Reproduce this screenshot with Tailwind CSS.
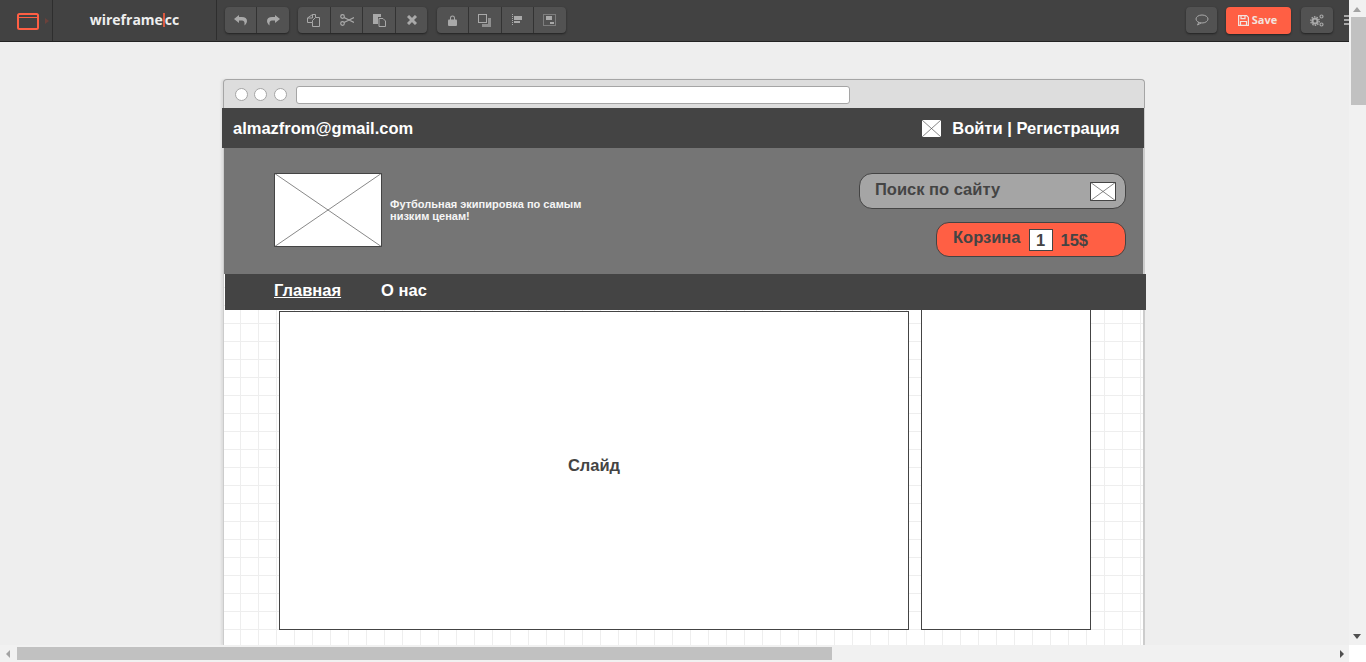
<!DOCTYPE html>
<html lang="en">
<head>
  <meta charset="UTF-8" />
  <title>wireframe.cc</title>
  <script src="https://cdn.jsdelivr.net/npm/@tailwindcss/browser@4"></script>
</head>
<body class="h-[662px] w-[1366px] overflow-hidden bg-[#eeeeee] font-['Liberation_Sans',sans-serif]">
  <div class="relative h-[662px] w-[1366px] overflow-hidden">

    <!-- Top toolbar -->
    <header class="flex h-[42px] w-[1349px] items-start border-b border-[#222222] bg-[#424242]">
      <div class="flex h-[41px] w-[53px] items-center border-r border-[#2e2e2e] pl-[17px]">
        <svg width="22" height="18" viewBox="0 0 22 18" fill="none" stroke="#ff5f44" stroke-width="2"><rect x="1" y="2" width="20" height="15" rx="1.500"/><path d="M1 5.500h20" stroke-width="1"/></svg>
        <span class="ml-[6px] h-0 w-0 border-y-[3px] border-l-[4px] border-y-transparent border-l-[#6b413b]"></span>
      </div>
      <div class="flex h-[40px] w-[164px] items-center justify-center border-r border-[#2e2e2e] pb-[1px] font-['Open_Sans',sans-serif] text-[14px] font-bold text-[#eeeeee]">
        wireframe<span class="h-[14px] w-[2px] bg-[#d9583f]"></span>cc
      </div>

      <div class="mt-[7px] ml-[8px] flex h-[26px] rounded-[4px] bg-[#525252] shadow-[0_1px_2px_#222222]">
        <div class="flex w-[32px] items-center justify-center border-r border-[#333333]">
          <svg width="13" height="12" viewBox="0 0 13 12" fill="#a9a9a9"><path d="M5 1 0 5l5 4V6.500h3c1.500 0 2.500 1 2.500 2.500v2.500C12 10 13 8.500 13 7c0-2.500-2-4-5-4H5z"/></svg>
        </div>
        <div class="flex w-[32px] items-center justify-center">
          <svg width="13" height="12" viewBox="0 0 13 12" fill="#a9a9a9"><path d="M8 1l5 4-5 4V6.500H5c-1.500 0-2.500 1-2.500 2.500v2.500C1 10 0 8.500 0 7c0-2.500 2-4 5-4h3z"/></svg>
        </div>
      </div>

      <div class="mt-[7px] ml-[9px] flex h-[26px] rounded-[4px] bg-[#525252] shadow-[0_1px_2px_#222222]">
        <div class="flex w-[33px] items-center justify-center border-r border-[#333333]">
          <svg class="mr-[1px]" width="13" height="13" viewBox="0 0 13 13" fill="none" stroke="#a9a9a9"><path d="M5.500.5h3v3h4v9h-7v-4h-5V4z"/><path d="M5.500.5V4H.5M8.500 3.500l-3 3v2"/></svg>
        </div>
        <div class="flex w-[32px] items-center justify-center border-r border-[#333333]">
          <svg width="14" height="12" viewBox="0 0 14 12" fill="none" stroke="#a9a9a9" stroke-width="1.200"><circle cx="2.500" cy="2.500" r="1.800"/><circle cx="2.500" cy="9.500" r="1.800"/><path d="M4 3.500l10 5M4 8.500l10-5"/></svg>
        </div>
        <div class="flex w-[33px] items-center justify-center border-r border-[#333333]">
          <svg width="13" height="14" viewBox="0 0 13 14"><path d="M0 1h8v3H5v7H0z" fill="#a9a9a9"/><path d="M6 5.500h4l2.500 2.500v5.500H6z" fill="#525252" stroke="#a9a9a9"/></svg>
        </div>
        <div class="flex w-[31px] items-center justify-center">
          <svg width="10" height="10" viewBox="0 0 10 10" stroke="#a9a9a9" stroke-width="3"><path d="M1 1l8 8M9 1l-8 8"/></svg>
        </div>
      </div>

      <div class="mt-[7px] ml-[10px] flex h-[26px] rounded-[4px] bg-[#525252] shadow-[0_1px_2px_#222222]">
        <div class="flex w-[32px] items-center justify-center border-r border-[#333333]">
          <svg width="9" height="11" viewBox="0 0 9 11" fill="#a9a9a9"><path d="M2 5V3a2.500 2.500 0 0 1 5 0v2H6V3a1.500 1.500 0 0 0-3 0v2z"/><rect y="4.500" width="9" height="6.500" rx="1"/></svg>
        </div>
        <div class="flex w-[33px] items-center justify-center border-r border-[#333333]">
          <svg class="mr-[1px]" width="13" height="13" viewBox="0 0 13 13"><path d="M4 13V10h6V4h3v9z" fill="#8f8f8f"/><rect x=".5" y=".5" width="8" height="8" fill="none" stroke="#a9a9a9"/></svg>
        </div>
        <div class="flex w-[32px] items-center justify-center border-r border-[#333333]">
          <svg class="mr-[2px]" width="10" height="12" viewBox="0 0 10 12" fill="#a9a9a9"><path d="M.5 0v12" stroke="#a9a9a9" stroke-dasharray="1 1"/><rect x="2" y="2" width="8" height="4"/><rect x="2" y="7" width="6" height="2"/></svg>
        </div>
        <div class="flex w-[32px] items-center justify-center">
          <svg class="mr-[1px]" width="13" height="12" viewBox="0 0 13 12" fill="#a9a9a9"><rect x=".5" y=".5" width="12" height="11" fill="none" stroke="#a9a9a9" stroke-dasharray="1 1"/><rect x="3" y="2" width="6" height="4"/><rect x="7" y="8" width="4" height="2"/></svg>
        </div>
      </div>

      <div class="mt-[7px] ml-auto flex h-[26px] w-[31px] items-center justify-center rounded-[4px] bg-[#525252] shadow-[0_1px_2px_#222222]">
        <svg width="14" height="12" viewBox="0 0 14 12" fill="none" stroke="#a9a9a9"><ellipse cx="7" cy="5" rx="6" ry="4"/><path d="M4 8l-1.500 3L6 9"/></svg>
      </div>
      <div class="mt-[7px] ml-[9px] flex h-[27px] w-[65px] items-center justify-center gap-[3px] rounded-[4px] bg-[#ff5f44] pr-[2px] font-['Open_Sans',sans-serif] text-[11px] font-bold text-[#f3e3df] shadow-[0_1px_2px_#222222]">
        <svg width="11" height="11" viewBox="0 0 11 11" fill="none" stroke="#f3e3df" stroke-width="1.200"><path d="M.6.6h8l1.800 1.800v8H.6z"/><path d="M3 .6v3h4v-3M2.500 10.400V6.500h6v3.900"/></svg>
        Save
      </div>
      <div class="mt-[7px] ml-[10px] flex h-[26px] w-[32px] items-center justify-center rounded-[4px] bg-[#525252] shadow-[0_1px_2px_#222222]">
        <svg width="14" height="13" viewBox="0 0 14 13" fill="none" stroke="#a9a9a9"><circle cx="5" cy="7" r="2.500" stroke-width="2"/><circle cx="5" cy="7" r="4.200" stroke-width="1.400" stroke-dasharray="1.500 1.100"/><circle cx="11.500" cy="2.500" r="1.500" stroke-width="1.200"/><circle cx="11.500" cy="10.500" r="1.500" stroke-width="1.200"/></svg>
      </div>
      <div class="mt-[15px] ml-[11px] flex w-[5px] flex-col gap-[2px]">
        <span class="h-[2px] bg-[#a9a9a9]"></span><span class="h-[2px] bg-[#a9a9a9]"></span><span class="h-[2px] bg-[#a9a9a9]"></span>
      </div>
    </header>

    <!-- Wireframe canvas -->
    <div class="absolute top-[79px] left-[223px] h-[566px] w-[922px] rounded-t-[4px] shadow-[-2px_0_2px_#dddddd]">
      <div class="flex h-[29px] items-center rounded-t-[4px] border-x border-t border-[#a5a5a5] bg-[#dddddd] pt-[1px] pl-[11px]">
        <span class="h-[13px] w-[13px] rounded-full border border-[#a5a5a5] bg-white"></span>
        <span class="ml-[6px] h-[13px] w-[13px] rounded-full border border-[#a5a5a5] bg-white"></span>
        <span class="ml-[7px] h-[13px] w-[13px] rounded-full border border-[#a5a5a5] bg-white"></span>
        <span class="ml-[9px] h-[18px] w-[554px] rounded-[3px] border border-[#a5a5a5] bg-white"></span>
      </div>
      <div class="h-[537px] w-[922px] border-r-[2px] border-l border-r-[#cccccc] border-l-[#cccccc] bg-white bg-[linear-gradient(#eeeeee_1px,transparent_1px),linear-gradient(90deg,#eeeeee_1px,transparent_1px)] bg-[size:18px_18px] bg-[position:-2px_-1px]"></div>
    </div>

    <!-- Wireframe objects -->
    <div class="absolute top-[108px] left-[222px] flex h-[40px] w-[922px] items-center bg-[#444444] pt-[1px] pl-[11px] text-[16.5px] font-bold text-white">
      almazfrom@gmail.com
      <svg class="ml-[509px]" width="19" height="17" viewBox="0 0 19 17"><rect width="19" height="17" fill="#fff"/><path d="M0 0l19 17M19 0 0 17" stroke="#555555" stroke-width=".7"/></svg>
      <span class="ml-[11px]">Войти | Регистрация</span>
    </div>

    <div class="absolute top-[148px] left-[224px] h-[126px] w-[919px] bg-[#757575]">
      <svg class="absolute top-[25px] left-[50px]" width="108" height="74" viewBox="0 0 108 74"><rect x=".5" y=".5" width="107" height="73" fill="#fff" stroke="#444444"/><path d="M0 0l108 74M108 0 0 74" stroke="#555555" stroke-width=".7"/></svg>
      <p class="absolute top-[50px] left-[166px] w-[205px] text-[11px] leading-[12px] font-bold text-[#f5f5f5]">Футбольная экипировка по самым низким ценам!</p>

      <div class="absolute top-[25px] right-[17px] flex h-[36px] w-[267px] items-center rounded-[13px] border border-[#444444] bg-[#a5a5a5] pr-[9px] pl-[15px] text-[16.5px] font-bold text-[#444444]">
        <span class="-mt-[4px]">Поиск по сайту</span>
        <svg class="ml-auto" width="26" height="19" viewBox="0 0 26 19"><rect x=".5" y=".5" width="25" height="18" fill="#fff" stroke="#444444"/><path d="M0 0l26 19M26 0 0 19" stroke="#555555" stroke-width=".7"/></svg>
      </div>

      <div class="absolute top-[74px] right-[17px] flex h-[35px] w-[190px] items-center rounded-[13px] border border-[#444444] bg-[#ff5f44] pl-[16px] text-[16.5px] font-bold text-[#444444]">
        <span class="-mt-[5px]">Корзина</span>
        <span class="ml-[8px] flex h-[22px] w-[24px] items-center justify-center border border-[#444444] bg-white pt-[2px]">1</span>
        <span class="ml-[8px] mt-[2px]">15$</span>
      </div>
    </div>

    <nav class="absolute top-[274px] left-[225px] flex h-[36px] w-[921px] items-center bg-[#444444] pb-[3px] pl-[49px] text-[16.5px] font-bold text-white">
      <span class="underline">Главная</span>
      <span class="ml-[40px]">О нас</span>
    </nav>

    <div class="absolute top-[311px] left-[279px] flex h-[319px] w-[630px] items-center justify-center border border-[#444444] bg-white pb-[10px] text-[16.5px] font-bold text-[#444444]">Слайд</div>
    <div class="absolute top-[310px] left-[921px] h-[320px] w-[170px] border-x border-b border-[#444444] bg-white"></div>

    <!-- Scrollbars -->
    <div class="absolute top-0 left-[1349px] h-[645px] w-[17px] bg-[#f1f1f1]">
      <div class="absolute top-[7px] left-[4px] h-0 w-0 border-x-[4px] border-b-[5px] border-x-transparent border-b-[#a3a3a3]"></div>
      <div class="absolute top-[17px] left-[2px] h-[88px] w-[15px] bg-[#c1c1c1]"></div>
      <div class="absolute bottom-[6px] left-[4px] h-0 w-0 border-x-[4px] border-t-[5px] border-x-transparent border-t-[#505050]"></div>
    </div>
    <div class="absolute top-[645px] left-0 h-[17px] w-[1349px] bg-[#f1f1f1]">
      <div class="absolute top-[5px] left-[6px] h-0 w-0 border-y-[4px] border-r-[4px] border-y-transparent border-r-[#a3a3a3]"></div>
      <div class="absolute top-[2px] left-[17px] h-[13px] w-[815px] bg-[#c1c1c1]"></div>
      <div class="absolute top-[5px] right-[5px] h-0 w-0 border-y-[4px] border-l-[4px] border-y-transparent border-l-[#505050]"></div>
    </div>
    <div class="absolute top-[645px] left-[1349px] h-[17px] w-[17px] bg-white"></div>
  </div>
</body>
</html>
